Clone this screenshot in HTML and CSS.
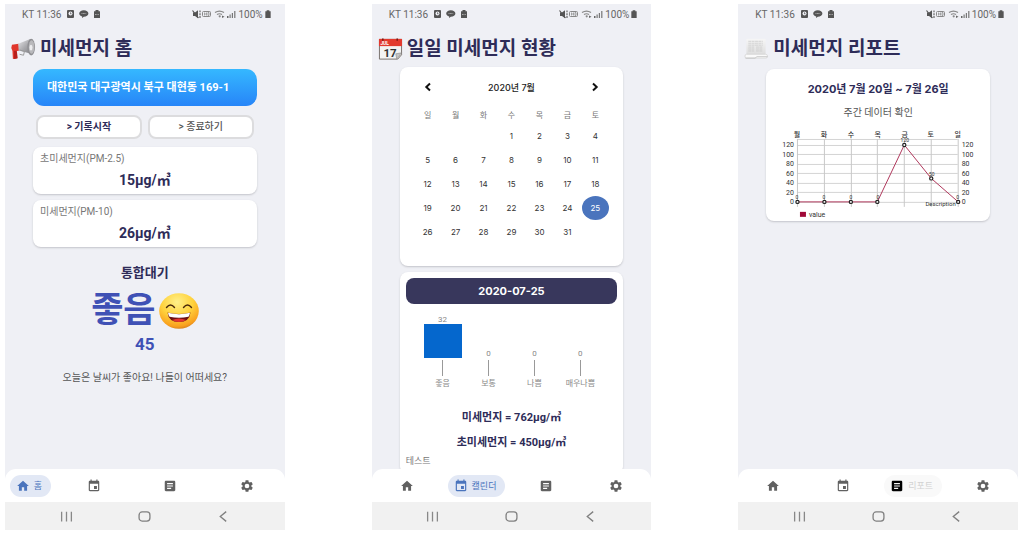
FILE: index.html
```
<!DOCTYPE html>
<html lang="ko">
<head>
<meta charset="utf-8">
<meta name="viewport" content="width=device-width, initial-scale=1">
<title>미세먼지</title>
<link rel="stylesheet" href="styles.css">
</head>
<body>
<svg class="sprite" aria-hidden="true">
  <defs>
    <linearGradient id="cone" x1="0" y1="0" x2="1" y2="1"><stop offset="0" stop-color="#e8e8ea"/><stop offset=".5" stop-color="#a9a9ad"/><stop offset="1" stop-color="#77777b"/></linearGradient>
    <radialGradient id="face" cx=".45" cy=".25" r=".8"><stop offset="0" stop-color="#fff08a"/><stop offset=".5" stop-color="#ffd23c"/><stop offset=".85" stop-color="#f9a01e"/><stop offset="1" stop-color="#c8741c"/></radialGradient>
    <linearGradient id="paper" x1="0" y1="0" x2="0" y2="1"><stop offset="0" stop-color="#f6f6f6"/><stop offset="1" stop-color="#dcdcdc"/></linearGradient>
  </defs>
  <symbol id="i-notice" viewBox="0 0 34 8">
    <rect x="0" y="0" width="7" height="8" rx="1" fill="#555"/><circle cx="3.5" cy="3.6" r="2" fill="#eff0f5"/><path d="M3.5 2.4v1.4h1" stroke="#555" stroke-width=".8" fill="none"/>
    <path d="M16.800.3c2.600 0 4.600 1.400 4.600 3.200s-2 3.200-4.600 3.200L15 7.900l.2-1.500c-1.800-.5-3-1.600-3-2.900C12.200 1.700 14.200.3 16.800.3z" fill="#555"/><path d="M14.500 3.500h4.700" stroke="#aaa" stroke-width="1" stroke-dasharray="1 .4"/>
    <path d="M27 1.200h1.500V0h3v1.200H33V8h-6z" fill="#555"/><path d="M28 4.500h4" stroke="#aaa" stroke-width="1" stroke-dasharray="1 .4"/>
  </symbol>
  <symbol id="i-signal" viewBox="0 0 44 9">
    <path d="M1 2.500h2L6 .3v8L3 6H1z" fill="#555"/><path d="M.5.5l6 7.500" stroke="#555" stroke-width="1.200"/><path d="M8 .5v1.800M8 3.200v2M8 6v2" stroke="#666" stroke-width="1.200"/>
    <rect x="10.500" y="1.500" width="8" height="5" rx="1" fill="none" stroke="#888"/><path d="M12.500 2.500v3M14.500 2.500v3M12.500 4h2M16 2.500v3h1v-3z" stroke="#888" stroke-width=".7" fill="none"/>
    <path d="M23 2.600q4.500-3 9 0M25 4.600q2.500-1.700 5 0" stroke="#888" stroke-width="1.200" fill="none"/><circle cx="27.700" cy="6.300" r="1.100" fill="#888"/><path d="M30 5.500v2.500l2.500-1.200z" fill="#666"/>
    <path d="M35 6h1.500v2H35z" fill="#666"/><path d="M37.500 4.500h1.200V8h-1.200zM39.800 3H41v5h-1.200zM42.200 1h1.200v7h-1.200z" fill="#777"/>
  </symbol>
  <symbol id="i-battery" viewBox="0 0 6 9"><path d="M0 1.500h1.500V.3h3v1.200H6V9H0z" fill="#555"/></symbol>
  <symbol id="i-home" viewBox="0 0 24 24"><path fill="currentColor" d="M10 20v-6h4v6h5v-8h3L12 3 2 12h3v8z"/></symbol>
  <symbol id="i-cal" viewBox="0 0 24 24"><path fill="currentColor" d="M17 12h-5v5h5v-5zM16 1v2H8V1H6v2H5c-1.110 0-1.990.9-1.990 2L3 19c0 1.100.89 2 2 2h14c1.100 0 2-.9 2-2V5c0-1.100-.9-2-2-2h-1V1h-2zm3 18H5V8h14v11z"/></symbol>
  <symbol id="i-list" viewBox="0 0 24 24"><path fill="currentColor" d="M19 3H5c-1.100 0-2 .9-2 2v14c0 1.100.9 2 2 2h14c1.100 0 2-.9 2-2V5c0-1.100-.9-2-2-2zm-5 14H7v-2h7v2zm3-4H7v-2h10v2zm0-4H7V7h10v2z"/></symbol>
  <symbol id="i-gear" viewBox="0 0 24 24"><path fill="currentColor" d="M19.430 12.980c.04-.32.07-.64.07-.98s-.03-.66-.07-.98l2.110-1.650c.19-.15.24-.42.12-.64l-2-3.460c-.12-.22-.39-.3-.61-.22l-2.490 1c-.52-.4-1.080-.73-1.690-.98l-.38-2.650C14.460 2.180 14.250 2 14 2h-4c-.25 0-.46.18-.49.42l-.38 2.650c-.61.25-1.170.59-1.690.98l-2.490-1c-.23-.09-.49 0-.61.22l-2 3.460c-.13.22-.07.49.12.64l2.110 1.650c-.04.32-.07.65-.07.98s.03.66.07.98l-2.110 1.650c-.19.15-.24.42-.12.64l2 3.460c.12.22.39.3.61.22l2.490-1c.52.4 1.080.73 1.690.98l.38 2.650c.03.24.24.42.49.42h4c.25 0 .46-.18.49-.42l.38-2.650c.61-.25 1.170-.59 1.690-.98l2.490 1c.23.09.49 0 .61-.22l2-3.460c.12-.22.07-.49-.12-.64l-2.110-1.650zM12 16a4 4 0 1 1 0-8 4 4 0 0 1 0 8z"/></symbol>
  <symbol id="i-recent" viewBox="0 0 12 12"><path d="M1.500 1.500v9M6 1.500v9M10.500 1.500v9" stroke="#888" stroke-width="1.200"/></symbol>
  <symbol id="i-circle" viewBox="0 0 12 12"><rect x="1" y="1.800" width="10" height="8.400" rx="2.800" fill="none" stroke="#808080" stroke-width="1.200"/></symbol>
  <symbol id="i-back" viewBox="0 0 12 12"><path d="M8.500 1.500L3 6l5.500 4.500" fill="none" stroke="#808080" stroke-width="1.200"/></symbol>
</svg>

<main class="board">
  <section class="phone">
    <header class="status"><span>KT 11:36</span><svg class="notice"><use href="#i-notice"/></svg><svg class="signal"><use href="#i-signal"/></svg><span>100%</span><svg class="battery"><use href="#i-battery"/></svg></header>
    <div class="screen">
      <h1 class="title">
        <svg class="emoji" viewBox="0 0 26 22" aria-hidden="true"><path d="M1 6.500l7-1 1 7-4 .8 1 7.500-4 .7L1.500 13 .3 10z" fill="#e0362c"/><path d="M3 13l3-.2 1 7.700-3.800.8z" fill="#b81f1c"/><path d="M7.500 5.500L20 .5l3 16-15-4z" fill="url(#cone)"/><ellipse cx="21" cy="9" rx="4" ry="8.700" fill="#8f8f93"/><ellipse cx="21.400" cy="9" rx="2.900" ry="7" fill="#b9b9bc"/><ellipse cx="20.800" cy="9.500" rx="1.600" ry="3" fill="#ececee"/><path d="M9 12l5 1.500-1 4-4-1" fill="none" stroke="#999" stroke-width="1"/></svg>
        미세먼지 홈</h1>
      <div class="address">대한민국 대구광역시 북구 대현동 169-1</div>
      <div class="actions"><button class="action action-main" type="button">&gt; 기록시작</button><button class="action" type="button">&gt; 종료하기</button></div>
      <article class="card reading"><h2 class="reading-name">초미세먼지(PM-2.5)</h2><p class="reading-value">15μg/㎥</p></article>
      <article class="card reading"><h2 class="reading-name">미세먼지(PM-10)</h2><p class="reading-value">26μg/㎥</p></article>
      <div class="overall">
        <h2 class="overall-name">통합대기</h2>
        <p class="grade">좋음<svg class="smile" viewBox="0 0 40 36" aria-hidden="true"><ellipse cx="20" cy="18" rx="19.800" ry="17.800" fill="url(#face)"/><path d="M7.500 14.500q4-5 8 0M24.500 14.500q4-5 8 0" fill="none" stroke="#4b2a0c" stroke-width="1.400" stroke-linecap="round"/><path d="M8.500 19.500q11.500 3 23 0Q30.500 29 20 29T8.500 19.500z" fill="#6b1013"/><path d="M9 19.800q11 2.800 22 0-.3 2.500-1.500 4-9.500 2-19 0Q9.200 22 9 19.800z" fill="#fff"/><path d="M13 27q7-3 14 0-3 2-7 2t-7-2z" fill="#e3342f"/></svg></p>
        <p class="score">45</p>
        <p class="advice">오늘은 날씨가 좋아요! 나들이 어떠세요?</p>
      </div>
    </div>
    <nav class="tabs tabs-first"><button class="tab tab-on" type="button"><svg><use href="#i-home"/></svg>홈</button><button class="tab" type="button" aria-label="캘린더"><svg><use href="#i-cal"/></svg></button><button class="tab" type="button" aria-label="리포트"><svg><use href="#i-list"/></svg></button><button class="tab" type="button" aria-label="설정"><svg><use href="#i-gear"/></svg></button></nav>
    <footer class="system"><svg><use href="#i-recent"/></svg><svg><use href="#i-circle"/></svg><svg><use href="#i-back"/></svg></footer>
  </section>

  <section class="phone">
    <header class="status"><span>KT 11:36</span><svg class="notice"><use href="#i-notice"/></svg><svg class="signal"><use href="#i-signal"/></svg><span>100%</span><svg class="battery"><use href="#i-battery"/></svg></header>
    <div class="screen">
      <h1 class="title">
        <svg class="emoji" viewBox="0 0 26 22" aria-hidden="true"><path d="M1.500 1h23v16l-4 4.500h-19z" fill="#f3f3f3" stroke="#77706c" stroke-width="1"/><path d="M1 .5h24V8H1z" fill="#e23a2e"/><path d="M5 0v2.500M20 0v2.500" stroke="#7c1a14" stroke-width="1.600"/><path d="M24.500 15l-6 1 1 5.500z" fill="#c4c4c4" stroke="#888" stroke-width=".6"/><text x="2.500" y="7" class="emoji-month">JUL</text><text x="12.500" y="19" class="emoji-day">17</text></svg>
        일일 미세먼지 현황</h1>
      <article class="card calendar">
        <div class="month"><button class="arrow" type="button" aria-label="이전 달"><svg viewBox="0 0 8 10"><path d="M6 1.500L2.300 5 6 8.500"/></svg></button><h2 class="month-name">2020년 7월</h2><button class="arrow" type="button" aria-label="다음 달"><svg viewBox="0 0 8 10"><path d="M2 1.500L5.700 5 2 8.500"/></svg></button></div>
        <table class="days">
          <thead><tr><th>일</th><th>월</th><th>화</th><th>수</th><th>목</th><th>금</th><th>토</th></tr></thead>
          <tbody>
            <tr><td></td><td></td><td></td><td><button type="button">1</button></td><td><button type="button">2</button></td><td><button type="button">3</button></td><td><button type="button">4</button></td></tr>
            <tr><td><button type="button">5</button></td><td><button type="button">6</button></td><td><button type="button">7</button></td><td><button type="button">8</button></td><td><button type="button">9</button></td><td><button type="button">10</button></td><td><button type="button">11</button></td></tr>
            <tr><td><button type="button">12</button></td><td><button type="button">13</button></td><td><button type="button">14</button></td><td><button type="button">15</button></td><td><button type="button">16</button></td><td><button type="button">17</button></td><td><button type="button">18</button></td></tr>
            <tr><td><button type="button">19</button></td><td><button type="button">20</button></td><td><button type="button">21</button></td><td><button type="button">22</button></td><td><button type="button">23</button></td><td><button type="button">24</button></td><td><button class="day-on" type="button">25</button></td></tr>
            <tr><td><button type="button">26</button></td><td><button type="button">27</button></td><td><button type="button">28</button></td><td><button type="button">29</button></td><td><button type="button">30</button></td><td><button type="button">31</button></td><td></td></tr>
          </tbody>
        </table>
      </article>
      <article class="card detail">
        <h2 class="date">2020-07-25</h2>
        <div class="bars">
          <div class="bar-col"><span>32</span><i class="bar" style="height:34px"></i><i class="tick"></i><span class="bar-name">좋음</span></div>
          <div class="bar-col"><span>0</span><i class="bar" style="height:0"></i><i class="tick"></i><span class="bar-name">보통</span></div>
          <div class="bar-col"><span>0</span><i class="bar" style="height:0"></i><i class="tick"></i><span class="bar-name">나쁨</span></div>
          <div class="bar-col"><span>0</span><i class="bar" style="height:0"></i><i class="tick"></i><span class="bar-name">매우나쁨</span></div>
        </div>
        <p class="sum">미세먼지 = 762μg/㎥</p>
        <p class="sum">초미세먼지 = 450μg/㎥</p>
        <p class="note">테스트</p>
      </article>
    </div>
    <nav class="tabs"><button class="tab" type="button" aria-label="홈"><svg><use href="#i-home"/></svg></button><button class="tab tab-on" type="button"><svg><use href="#i-cal"/></svg>캘린더</button><button class="tab" type="button" aria-label="리포트"><svg><use href="#i-list"/></svg></button><button class="tab" type="button" aria-label="설정"><svg><use href="#i-gear"/></svg></button></nav>
    <footer class="system"><svg><use href="#i-recent"/></svg><svg><use href="#i-circle"/></svg><svg><use href="#i-back"/></svg></footer>
  </section>

  <section class="phone">
    <header class="status"><span>KT 11:36</span><svg class="notice"><use href="#i-notice"/></svg><svg class="signal"><use href="#i-signal"/></svg><span>100%</span><svg class="battery"><use href="#i-battery"/></svg></header>
    <div class="screen">
      <h1 class="title">
        <svg class="emoji" viewBox="0 0 26 22" aria-hidden="true"><path d="M2.500.5h20v17h-20z" fill="url(#paper)"/><path d="M4.500 3h15M4.500 5h15M4.500 7h15M4.500 9h6M12.500 9h7M4.500 11h6M12.500 11h7M4.500 13h6M12.500 13h7" stroke="#c9c9c9" stroke-width=".8" stroke-dasharray="3 .5"/><path d="M2.500 16.500h20q2 0 2 2t-2 2h-20q-1.500 0-1.500-2t1.500-2z" fill="#fafafa" stroke="#cfcfcf" stroke-width=".7"/><path d="M1.500 20.500h10l2-1.500h11" stroke="#bbb" stroke-width=".8" fill="none"/></svg>
        미세먼지 리포트</h1>
      <article class="card report">
        <h2 class="period">2020년 7월 20일 ~ 7월 26일</h2>
        <p class="caption">주간 데이터 확인</p>
        <svg class="chart" viewBox="0 0 224 94" role="img" aria-label="주간 데이터">
          <path d="M31 12.500h161M31 18.500h161M31 27.500h161M31 37.500h161M31 46.500h161M31 56.500h161M31 65.500h161M31 75.500h161" stroke="#d4d4d4"/>
          <path d="M31.500 12v68M58.500 12v68M85.500 12v68M111.500 12v68M138.500 12v68M165.500 12v68M192.500 12v68" stroke="#c8c8c8"/>
          <g class="axis-day"><text x="31" y="10">월</text><text x="58" y="10">화</text><text x="85" y="10">수</text><text x="112" y="10">목</text><text x="139" y="10">금</text><text x="165" y="10">토</text><text x="192" y="10">일</text></g>
          <g class="axis-left"><text x="28" y="20">120</text><text x="28" y="30">100</text><text x="28" y="39">80</text><text x="28" y="49">60</text><text x="28" y="58">40</text><text x="28" y="68">20</text><text x="28" y="77">0</text></g>
          <g class="axis-right"><text x="196" y="20">120</text><text x="196" y="30">100</text><text x="196" y="39">80</text><text x="196" y="49">60</text><text x="196" y="58">40</text><text x="196" y="68">20</text><text x="196" y="77">0</text></g>
          <path d="M31.500 75h80L138.500 18l27 33.500L192.500 75" fill="none" stroke="#b0385c" stroke-width="1"/>
          <g fill="#fff" stroke="#222" stroke-width="1.200"><circle cx="31.500" cy="75" r="1.600"/><circle cx="58.500" cy="75" r="1.600"/><circle cx="85" cy="75" r="1.600"/><circle cx="111.500" cy="75" r="1.600"/><circle cx="138.500" cy="18" r="1.600"/><circle cx="165.500" cy="51.500" r="1.600"/><circle cx="192.500" cy="75" r="1.600"/></g>
          <g class="point"><text x="31" y="72">0</text><text x="58" y="72">0</text><text x="85" y="72">0</text><text x="112" y="72">0</text><text x="139" y="15">120</text><text x="166" y="49">50</text><text x="192" y="72">0</text></g>
          <text x="190" y="79" class="desc">Description</text>
          <path d="M34 85h6v5h-6z" fill="#a00838"/><text x="43" y="90" class="legend">value</text>
        </svg>
      </article>
    </div>
    <nav class="tabs"><button class="tab" type="button" aria-label="홈"><svg><use href="#i-home"/></svg></button><button class="tab" type="button" aria-label="캘린더"><svg><use href="#i-cal"/></svg></button><button class="tab tab-muted" type="button"><svg><use href="#i-list"/></svg><span>리포트</span></button><button class="tab" type="button" aria-label="설정"><svg><use href="#i-gear"/></svg></button></nav>
    <footer class="system"><svg><use href="#i-recent"/></svg><svg><use href="#i-circle"/></svg><svg><use href="#i-back"/></svg></footer>
  </section>
</main>
</body>
</html>
```
FILE: styles.css
```
* { box-sizing: border-box; }
body { margin: 0; background: #fff; color: #2e2c58; font-family: Roboto, "Noto Sans CJK KR", sans-serif; }
h1, h2, p { margin: 0; }
button { padding: 0; border: 0; background: none; color: inherit; font: inherit; cursor: pointer; }
.sprite { position: absolute; width: 0; height: 0; }

.board { display: grid; grid-template-columns: repeat(3, 1fr); gap: 87px; height: 100vh; padding: 4px 8px 7px 5px; }
.phone { display: flex; flex-direction: column; min-width: 0; min-height: 0; overflow: hidden; background: #eff0f5; }
.status { display: flex; align-items: center; flex: none; height: 20px; padding: 0 14px 0 17px; color: #666; font-size: 10px; }
.notice { width: 34px; height: 8px; margin-left: 6px; }
.signal { width: 44px; height: 9px; margin: 0 2px 0 auto; }
.battery { width: 6px; height: 8px; margin-left: 2px; }
.screen { flex: 1; min-height: 0; overflow: hidden; }

.title { display: flex; align-items: center; gap: 4px; height: 39px; padding: 11px 6px 0; font-size: 19px; line-height: 28px; font-weight: 700; }
.emoji { width: 25px; height: 22px; flex: none; }
.emoji-month { fill: #fff; font-size: 5px; font-weight: 700; }
.emoji-day { fill: #333; font-size: 12px; font-weight: 700; text-anchor: middle; }

.card { margin: 0 28px 6px; border-radius: 8px; background: #fff; box-shadow: 0 1px 2px #c3c4ca; }
.address { margin: 6px 28px 9px; padding: 10px 14px; border-radius: 11px; background: linear-gradient(#35b8ff, #2785f8); color: #fff; font-size: 11px; line-height: 17px; font-weight: 700; }
.actions { display: grid; grid-template-columns: 1fr 1fr; gap: 6px; margin: 0 31px 8px; }
.action { height: 24px; border: 2px solid #dcdcde; border-radius: 8px; background: #fff; color: #555; font-size: 10px; line-height: 16px; font-weight: 500; }
.action-main { color: #2e2c58; font-weight: 700; }
.reading { height: 47px; padding: 4px 7px; }
.reading-name { color: #777; font-size: 10px; line-height: 16px; font-weight: 400; }
.reading-value { font-size: 14px; line-height: 26px; font-weight: 700; text-align: center; }
.overall { padding-top: 10px; text-align: center; }
.overall-name { font-size: 13px; line-height: 20px; font-weight: 700; }
.grade { display: flex; align-items: center; justify-content: center; gap: 3px; margin-top: 5px; color: #3f51b5; font-size: 35px; line-height: 46px; font-weight: 700; }
.smile { width: 40px; height: 36px; }
.score { color: #3f51b5; font-size: 17px; line-height: 20px; font-weight: 700; }
.advice { margin-top: 16px; color: #555; font-size: 10px; line-height: 16px; }

.calendar { margin-top: 4px; padding: 10px 14px 22px; font-family: Inter, "Noto Sans CJK KR", sans-serif; }
.month { display: grid; grid-template-columns: 1fr 5fr 1fr; align-items: center; height: 20px; margin-bottom: 7px; }
.month-name { color: #222; font-size: 9px; font-weight: 500; text-align: center; }
.arrow { display: flex; align-items: center; justify-content: center; }
.arrow svg { width: 8px; height: 10px; fill: none; stroke: #111; stroke-width: 2; }
.days { width: 100%; table-layout: fixed; border-collapse: collapse; color: #333; font-size: 8px; text-align: center; }
.days th { height: 20px; padding: 2px 0 0; color: #777; font-weight: 400; line-height: 16px; }
.days td { height: 24px; padding: 0; }
.days button { display: block; width: 27px; height: 24px; margin: 0 auto; border-radius: 50%; }
.days .day-on { background: #4a74bd; color: #fff; }

.detail { padding: 6px; }
.date { border-radius: 8px; background: #38375c; color: #fff; font-family: Inter, sans-serif; font-size: 11px; line-height: 26px; text-align: center; }
.bars { display: grid; grid-template-columns: repeat(4, 1fr); align-items: end; margin: 11px 14px 16px; color: #888; font-size: 8px; line-height: 9px; }
.bar-col { display: flex; flex-direction: column; align-items: center; }
.bar { width: 38px; background: #0567cd; }
.tick { width: 1px; height: 16px; margin: 2px 0; background: #999; }
.bar-name { line-height: 11px; white-space: nowrap; }
.sum { font-size: 11px; line-height: 25px; font-weight: 700; text-align: center; }
.note { color: #777; font-size: 9px; line-height: 13px; }

.report { margin-top: 6px; padding-top: 10px; text-align: center; }
.period { font-family: Inter, "Noto Sans CJK KR", sans-serif; font-size: 11px; line-height: 20px; font-weight: 700; }
.caption { margin-top: 6px; color: #555; font-size: 10px; line-height: 16px; }
.chart { display: block; width: 100%; margin-top: 6px; fill: #333; font-size: 7px; }
.axis-day { font-size: 7px; font-weight: 500; text-anchor: middle; }
.axis-left, .desc { text-anchor: end; }
.point { font-size: 5px; text-anchor: middle; }
.desc { font-size: 6px; }

.tabs { display: grid; grid-template-columns: repeat(4, 1fr); place-items: center; flex: none; height: 33px; border-radius: 11px 11px 0 0; background: #fff; color: #616161; }
.tabs-first { grid-template-columns: 51px 1fr 1fr 1fr; }
.tab { display: flex; align-items: center; justify-content: center; gap: 4px; height: 22px; padding: 0 6px; border-radius: 11px; font-size: 9px; white-space: nowrap; }
.tab svg { width: 14px; height: 14px; }
.tab-on { padding: 0 9px 0 6px; background: #e2e8f5; color: #4a74bd; }
.tab-muted { padding: 0 9px 0 6px; background: #f9f9f9; color: #000; }
.tab-muted span { color: #d2d2d2; }
.system { display: grid; grid-template-columns: repeat(3, 1fr); place-items: center; flex: none; height: 28px; padding: 0 22px; background: #f1f1f1; }
.system svg { width: 13px; height: 13px; }
```
